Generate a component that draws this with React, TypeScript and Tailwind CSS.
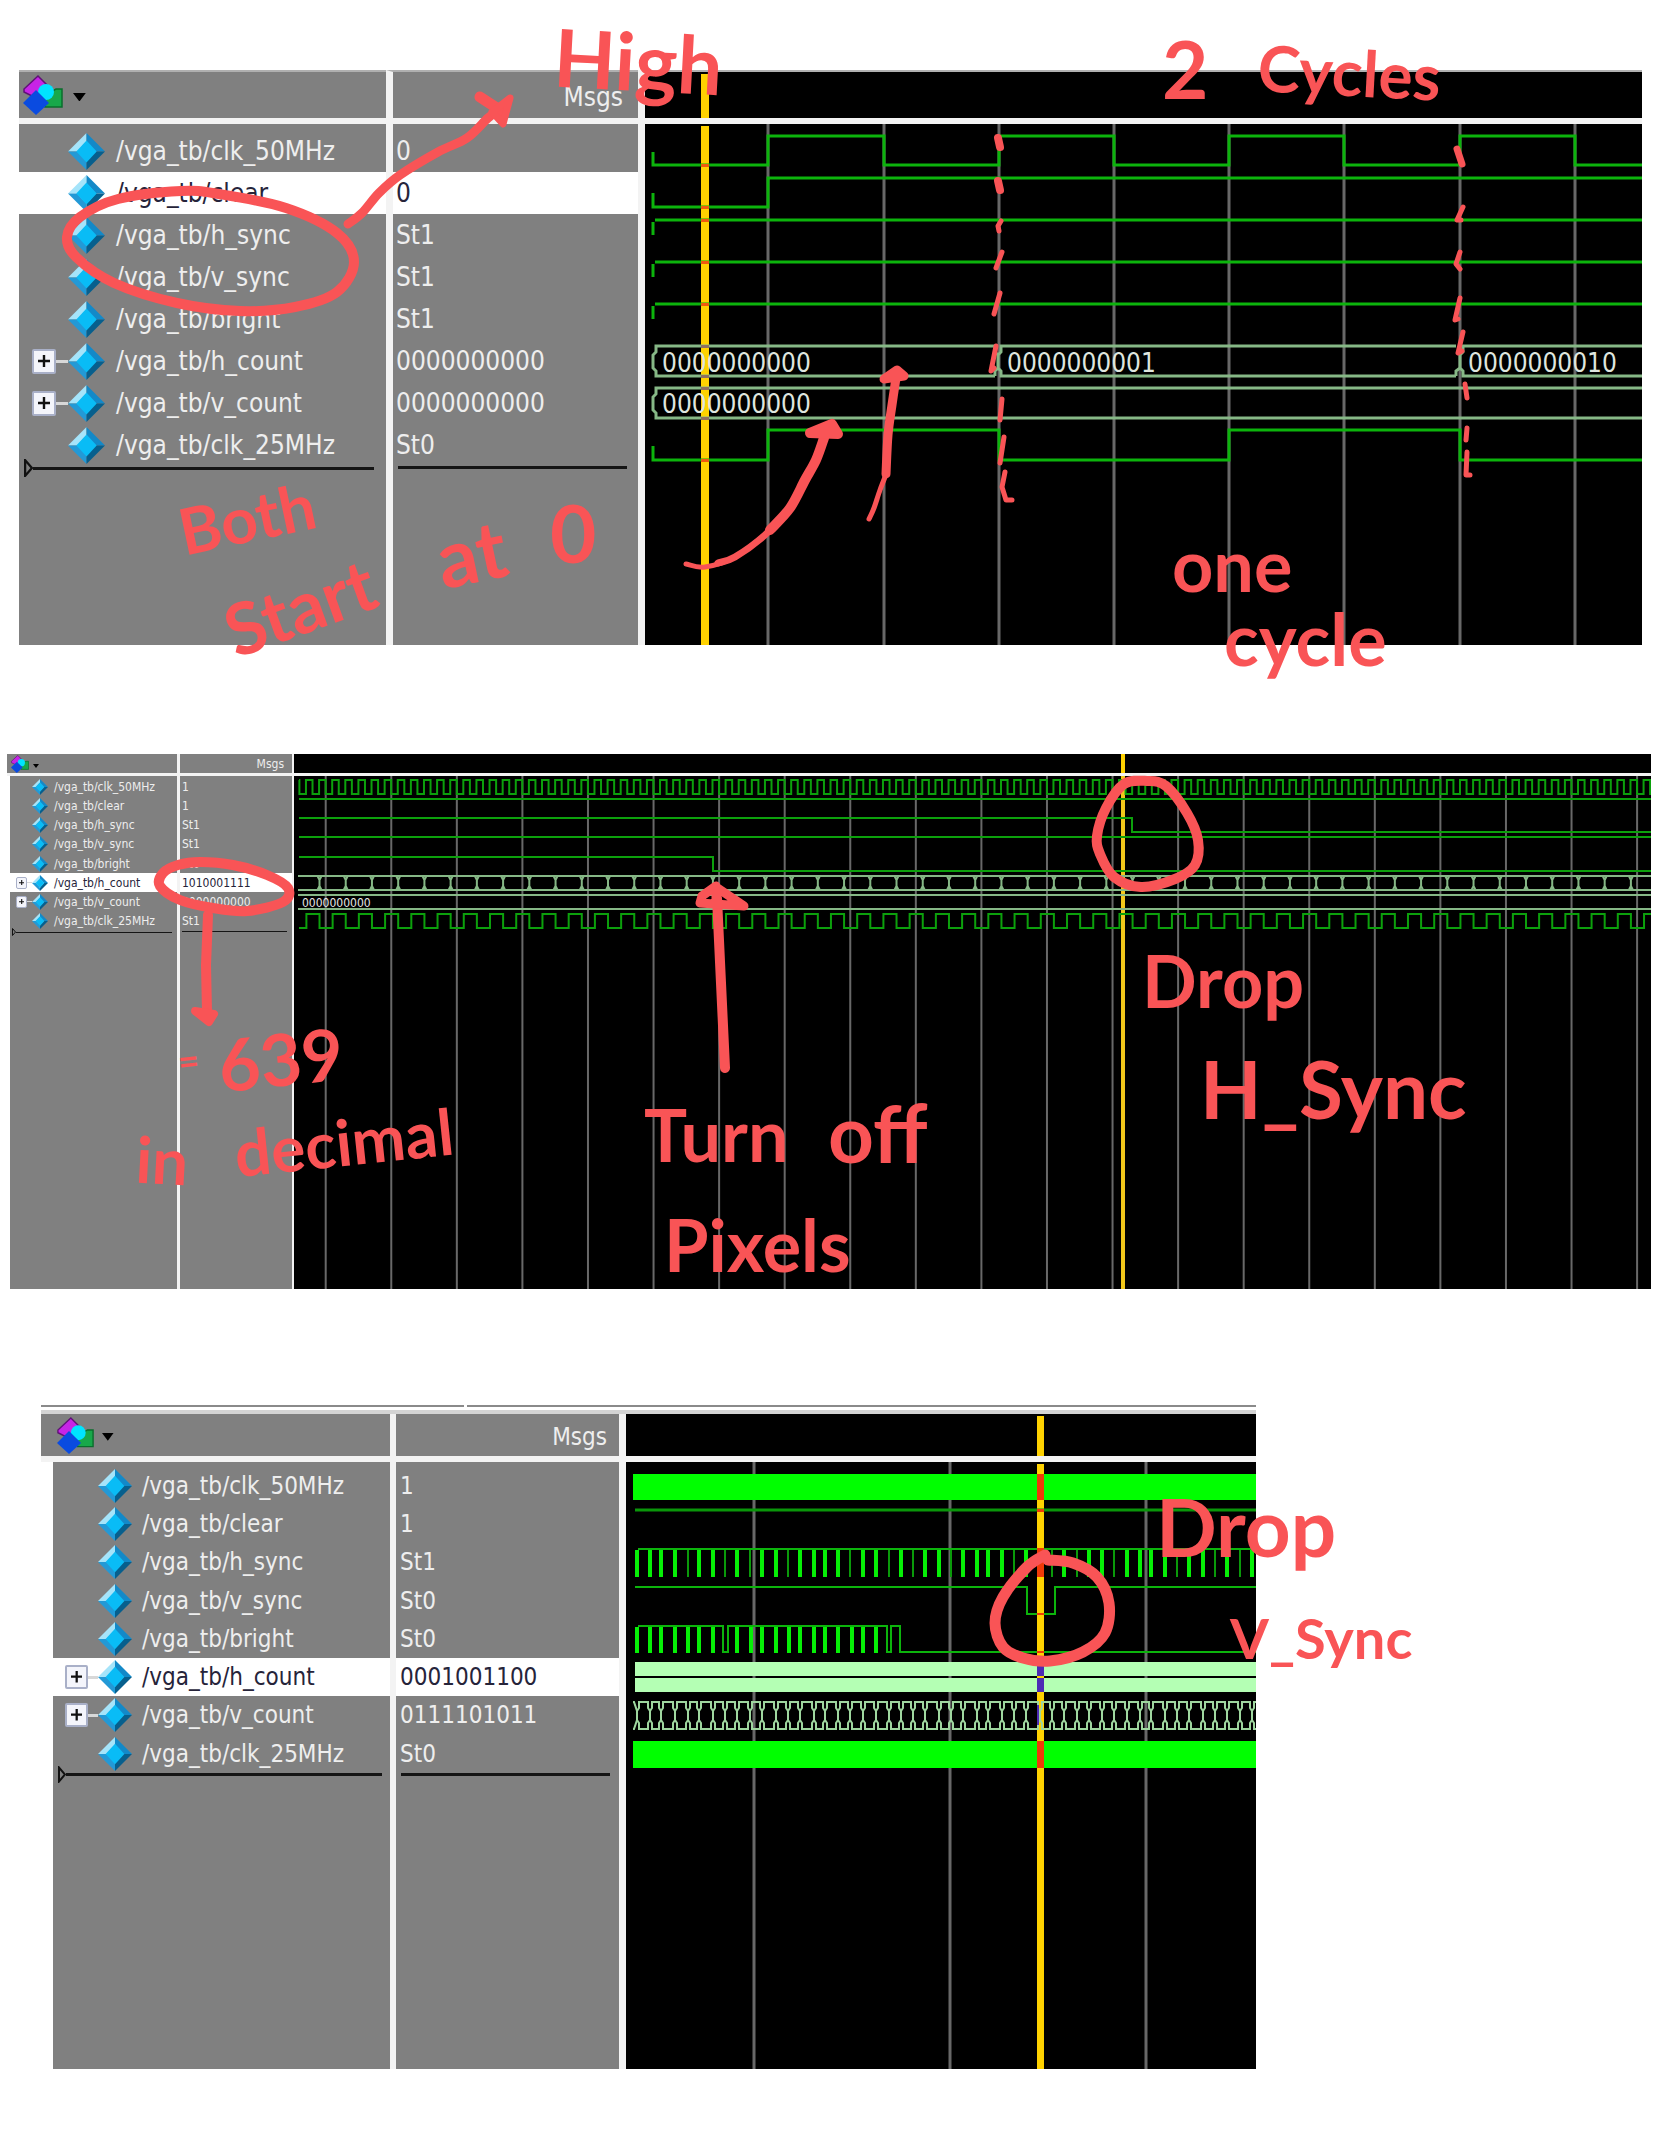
import type { ReactNode } from 'react';

type Signal = { name: string; value: string; bus?: boolean; selected?: boolean };

type Sizes = {
  table: string;
  nameCol: string;
  valueCol: string;
  header: string;
  divider: string;
  indent: string;
  spacer: string;
  row: string;
  tail: string;
  slot: string;
  expander: string;
  diamond: string;
  nameGap: string;
  valuePad: string;
  msgsPad: string;
  logo: string;
  caret: string;
  rule: string;
  nameRule: string;
  valueRule: string;
  stop: string;
};

function Diamond({ className }: { className: string }) {
  return (
    <svg viewBox="0 0 40 40" className={'shrink-0 ' + className} aria-hidden="true">
      <polygon points="20,0 0,20 10,20 20,9" fill="#a5e4fa" />
      <polygon points="20,0 40,20 30,20 20,9" fill="#1389c8" />
      <polygon points="0,20 20,40 20,31 10,20" fill="#2399d6" />
      <polygon points="40,20 20,40 20,31 30,20" fill="#075f8d" />
      <polygon points="20,8 31,20 20,32 9,20" fill="#09bcf6" />
    </svg>
  );
}

function Logo({ className }: { className: string }) {
  return (
    <svg viewBox="0 0 40 40" className={'shrink-0 ' + className} aria-hidden="true">
      <polygon points="15,1 28,14 15,24 1,17 1,14" fill="#c724e6" stroke="#5f1277" strokeWidth="1.5" />
      <path d="M22 32 V20 L33 14 H39 V32 Z" fill="#18a84a" stroke="#0a6d2c" strokeWidth="1.5" />
      <circle cx="23" cy="17" r="8" fill="#00e4ff" />
      <polygon points="13,15 26,28 13,40 0,28" fill="#0a4be0" />
    </svg>
  );
}

function SignalTable({ s, signals }: { s: Sizes; signals: Signal[] }) {
  return (
    <table
      className={'shrink-0 table-fixed border-separate border-spacing-0 bg-[#808080] leading-none whitespace-nowrap ' + s.table}
    >
      <colgroup>
        <col className={s.nameCol} />
        <col className={s.valueCol} />
      </colgroup>
      <thead>
        <tr>
          <th className={'border-[#f3f3f3] p-0 text-left ' + s.header}>
            <button type="button" aria-label="Signal list menu" className={'flex items-center ' + s.caret}>
              <Logo className={s.logo} />
              <svg viewBox="0 0 12 8" className="mt-1 w-1/5" aria-hidden="true">
                <polygon points="0,0 12,0 6,8" fill="#000" />
              </svg>
            </button>
          </th>
          <th
            className={
              'border-[#f3f3f3] p-0 text-right font-normal text-[#eeeeee] ' + s.header + ' ' + s.divider + ' ' + s.msgsPad
            }
          >
            Msgs
          </th>
        </tr>
      </thead>
      <tbody>
        <tr className={s.spacer}>
          <td className={'border-white p-0 ' + s.indent} />
          <td className={'border-[#f3f3f3] p-0 ' + s.divider} />
        </tr>
        {signals.map((sig) => {
          const tone = sig.selected ? 'bg-white text-[#26243a]' : 'text-[#eeeeee]';
          return (
            <tr key={sig.name} className={s.row}>
              <td className={'border-white p-0 ' + s.indent + ' ' + tone}>
                <div className="flex items-center">
                  <span className={'flex shrink-0 items-center justify-end ' + s.slot}>
                    {sig.bus && (
                      <>
                        <button
                          type="button"
                          aria-label={'Expand ' + sig.name}
                          className={
                            'flex shrink-0 items-center justify-center rounded-[2px] border-[#a9b0c8] bg-[#f4f5fb] ' + s.expander
                          }
                        >
                          <svg viewBox="0 0 12 12" className="w-3/5" aria-hidden="true">
                            <path d="M6 0V12M0 6H12" stroke="#111" strokeWidth="2.4" />
                          </svg>
                        </button>
                        <span className={'grow bg-[#d8d8d8] ' + s.rule} />
                      </>
                    )}
                  </span>
                  <Diamond className={s.diamond} />
                  <span className={s.nameGap}>{sig.name}</span>
                </div>
              </td>
              <td className={'border-[#f3f3f3] p-0 ' + s.divider + ' ' + s.valuePad + ' ' + tone}>{sig.value}</td>
            </tr>
          );
        })}
        <tr className={s.tail}>
          <td className={'border-white p-0 align-top ' + s.indent}>
            <div className={'flex items-center ' + s.nameRule}>
              <svg viewBox="0 0 8 16" className={'shrink-0 ' + s.stop} aria-hidden="true">
                <path d="M1 1V15L7 8Z" fill="none" stroke="#111" strokeWidth="2" />
              </svg>
              <span className={'grow bg-[#151515] ' + s.rule} />
            </div>
          </td>
          <td className={'border-[#f3f3f3] p-0 align-top ' + s.divider}>
            <div className={'flex items-center ' + s.valueRule}>
              <span className={'grow bg-[#151515] ' + s.rule} />
            </div>
          </td>
        </tr>
      </tbody>
    </table>
  );
}

function WavePane({
  edge,
  header,
  cursorHead,
  ox,
  oy,
  children,
}: {
  edge: string;
  header: string;
  cursorHead: string;
  ox: number;
  oy: number;
  children: ReactNode;
}) {
  return (
    <div className={'flex min-w-0 grow flex-col border-[#f3f3f3] bg-black ' + edge}>
      <div className={'relative shrink-0 border-[#f3f3f3] ' + header}>
        <span className={'absolute bottom-0 bg-[#ffd200] ' + cursorHead} />
      </div>
      <div className="relative grow overflow-hidden">
        <svg className="absolute inset-0 h-full w-full">
          <g transform={`translate(${-ox} ${-oy})`}>{children}</g>
        </svg>
      </div>
    </div>
  );
}

const FAR = 4000;
const GREEN = '#0cb40c';
const PALE = '#86b886';

function range(n: number) {
  return Array.from({ length: n }, (_, i) => i);
}

/* Square wave that starts at x0 and toggles at each of the given edges. */
function square(x0: number, edges: number[], high: number, low: number, startHigh = false) {
  let up = startHigh;
  let d = `M${x0} ${up ? high : low}`;
  edges.forEach((x) => {
    d += `H${x}`;
    up = !up;
    d += `V${up ? high : low}`;
  });
  return d + `H${FAR}`;
}

function Grid({ xs, y, w }: { xs: number[]; y: number; w: number }) {
  return <path d={xs.map((x) => `M${x} ${y}V${FAR}`).join('')} stroke="#686868" strokeWidth={w} />;
}

function WaveOne() {
  const grid = range(26).map((i) => Math.round(768.3 + 115.2 * i));
  return (
    <>
      <Grid xs={grid} y={120} w={3} />
      <rect x={701} y={126} width={8} height={FAR} fill="#ffd200" />
      <g fill="none" stroke={GREEN} strokeWidth={3}>
        <path d={'M653 152V165' + square(653, grid, 136, 165).replace('M653 165', '')} />
        <path d={`M653 193V207H768V178H${FAR}`} />
        <path d={`M653 235V222M655 220H${FAR}`} />
        <path d={`M653 277V264M655 262H${FAR}`} />
        <path d={`M653 319V306M655 304H${FAR}`} />
        <path d={'M653 446V460' + square(653, grid.filter((_, i) => i % 2 === 0), 430, 460).replace('M653 460', '')} />
      </g>
      <g fill="none" stroke={PALE} strokeWidth={3}>
        <path d="M995 346H656V352L653 355V368L656 371V376H995" />
        <path d="M1456 346H1001V352L998 355V368L1001 371V376H1456M995 376V371L998 368M995 346V352L998 355" />
        <path d={`M${FAR} 346H1463V352L1460 355V368L1463 371V376H${FAR}M1456 376V371L1460 368`} />
        <path d={`M${FAR} 388H656V394L653 397V410L656 413V418H${FAR}`} />
      </g>
      <g fill="#f05a10">
        {[165, 207, 220, 262, 304, 460].map((y) => (
          <rect key={y} x={701} y={y - 1} width={8} height={3} />
        ))}
      </g>
      <g fill="#8f7060">
        {[346, 376, 388, 418].map((y) => (
          <rect key={y} x={701} y={y - 1} width={8} height={3} />
        ))}
      </g>
      <g fill="#dfe6df" fontSize="26">
        <text x={662} y={372}>0000000000</text>
        <text x={1007} y={372}>0000000001</text>
        <text x={1468} y={372}>0000000010</text>
        <text x={662} y={413}>0000000000</text>
      </g>
    </>
  );
}

function WaveTwo() {
  const grid = range(40).map((i) => 325.7 + 65.57 * i);
  const fast = range(400).map((i) => 299.4 + 6.557 * i);
  const slow = range(200).map((i) => 306.4 + 13.114 * i);
  const cells = range(100).map((i) => 319.5 + 26.228 * i);
  return (
    <>
      <Grid xs={grid} y={770} w={2} />
      <rect x={1121} y={770} width={4} height={FAR} fill="#f2c81a" />
      <g fill="none" stroke="#0ca00c" strokeWidth={2}>
        <path d={square(299, fast, 780, 794, true)} />
        <path d={`M299 799H${FAR}`} />
        <path d={`M299 818H1132V832H${FAR}`} />
        <path d={`M299 837H${FAR}`} />
        <path d={`M299 857H713V871H${FAR}`} />
        <path d={square(299, slow, 914, 928)} />
      </g>
      <g fill="none" stroke={PALE} strokeWidth={2}>
        <path d={`M298 876H${FAR}M298 890H${FAR}M298 895H${FAR}M298 909H${FAR}`} />
        <path
          strokeWidth={2}
          d={cells.map((x) => `M${x - 2} 876L${x} 880V886L${x - 2} 890M${x + 2} 876L${x} 880M${x} 886L${x + 2} 890`).join('')}
        />
      </g>
      <text x={302} y={907} fontSize="12" fill="#e6e6e6">
        0000000000
      </text>
    </>
  );
}

const THICK = [
  50, 91, 124, 165, 238, 279, 352, 427, 467, 541, 581, 614, 655, 728, 769, 843, 916, 957, 1030, 1071, 1104, 1145, 1218,
  1261, 1332, 1407, 1446, 1520, 1561, 1594, 1634, 1708, 1748, 1822, 1896, 1935,
];
const THIN = [203, 316, 390, 504, 691, 806, 880, 992, 1183, 1295, 1370, 1483, 1671, 1785, 1859];
const BRIGHT = [50, 91, 124, 165, 205, 238, 279, 352, 393, 427, 467, 508, 541, 581, 614, 655, 695, 728, 769];

function WaveThree() {
  const grid = range(16).map((i) => Math.round(754.3 + 195.6 * i));
  const cells = [...THICK, ...THIN].sort((a, b) => a - b).map((v) => Math.round(620 + v / 3));
  const bars = (list: number[], w: number, y: number, h: number) =>
    list.map((v) => <rect key={v} x={Math.round(620 + v / 3 - w / 2)} y={y} width={w} height={h} />);
  return (
    <>
      <Grid xs={grid} y={1450} w={3} />
      <rect x={1037} y={1462} width={7} height={FAR} fill="#ffd200" />
      <rect x={633} y={1472} width={FAR} height={26} fill="#00ff00" />
      <rect x={633} y={1739} width={FAR} height={27} fill="#00ff00" />
      <g fill="#06f006">
        {bars(THICK, 4, 1548, 27)}
        {bars(BRIGHT, 4, 1625, 26)}
      </g>
      <g fill="#0a9a0a">{bars(THIN, 2, 1548, 27)}</g>
      <g fill="none" stroke={GREEN} strokeWidth={2}>
        <path strokeWidth={3} stroke="#0a960a" d={`M635 1508H${FAR}`} />
        <path d={`M638 1547H${FAR}`} />
        <path d={`M635 1585H1027V1612H1055V1585H${FAR}`} />
        <path d={`M638 1624H723V1650H728V1624H887V1650H891V1624H900V1650H${FAR}`} />
      </g>
      <rect x={635} y={1660} width={FAR} height={14} fill="#b4ffb4" />
      <rect x={635} y={1676} width={FAR} height={14} fill="#b4ffb4" />
      <g fill="none" stroke="#9ed69e" strokeWidth={2}>
        <path d="M633 1700H634L637 1709V1718L634 1727H633" />
        {cells.slice(0, -1).map((a, i) => {
          const b = cells[i + 1];
          return (
            <path
              key={a}
              d={`M${a + 2} 1700H${b - 2}V1706L${b} 1709V1718L${b - 2} 1721V1727H${a + 2}V1721L${a} 1718V1709L${a + 2} 1706Z`}
            />
          );
        })}
      </g>
      <g fill="#f03a08">
        <rect x={1037} y={1472} width={7} height={26} />
        <rect x={1037} y={1507} width={7} height={3} />
        <rect x={1037} y={1546} width={7} height={29} />
        <rect x={1037} y={1611} width={7} height={2} />
        <rect x={1037} y={1649} width={7} height={2} />
        <rect x={1037} y={1739} width={7} height={27} />
      </g>
      <g fill="#4d2bb5">
        <rect x={1037} y={1660} width={7} height={14} />
        <rect x={1037} y={1676} width={7} height={14} />
        <rect x={1037} y={1703} width={2} height={20} />
      </g>
    </>
  );
}

type Pt = [number, number];

/* Smooth pen stroke through the given points. */
function stroke(p: Pt[], closed = false) {
  const n = p.length;
  const at = (i: number) => (closed ? p[(i + n) % n] : p[Math.max(0, Math.min(n - 1, i))]);
  let d = `M${p[0][0]} ${p[0][1]}`;
  for (let i = 0; i < (closed ? n : n - 1); i++) {
    const [a, b, c, e] = [at(i - 1), at(i), at(i + 1), at(i + 2)];
    d += `C${b[0] + (c[0] - a[0]) / 6} ${b[1] + (c[1] - a[1]) / 6} ${c[0] - (e[0] - b[0]) / 6} ${c[1] - (e[1] - b[1]) / 6} ${c[0]} ${c[1]}`;
  }
  return d;
}

function PenMarks() {
  return (
    <svg className="pointer-events-none absolute inset-0 h-full w-full" aria-hidden="true">
      <g fill="none" stroke="#f95456" strokeLinecap="round" strokeLinejoin="round" strokeWidth={10}>
        <path
          d={stroke(
            [
              [181, 191], [219, 194], [286, 208], [337, 233], [354, 262], [337, 292], [295, 307], [240, 311],
              [177, 303], [114, 283], [76, 257], [67, 237], [80, 217], [118, 199],
            ],
            true,
          )}
        />
        <path strokeWidth={9} d={stroke([[348, 224], [362, 213], [379, 193], [400, 175], [438, 152], [467, 138], [488, 118], [499, 110]])} />
        <path strokeWidth={11} d="M480 97L503 112" />
        <path strokeWidth={7} d="M503 124L510 98L492 112Z" fill="#f95456" />

        <path strokeWidth={5} d={stroke([[686, 564], [705, 567], [735, 557], [765, 535]])} />
        <path strokeWidth={7} d={stroke([[718, 563], [735, 557], [765, 535], [790, 508]])} />
        <path d={stroke([[770, 530], [790, 508], [805, 480], [816, 460], [824, 438]])} />
        <path strokeWidth={10} fill="#f95456" d="M810 433L832 424L838 434Z" />
        <path strokeWidth={5} d={stroke([[869, 519], [874, 508], [880, 490], [887, 472]])} />
        <path strokeWidth={9} d={stroke([[886, 474], [888, 435], [892, 405], [896, 378]])} />
        <path strokeWidth={9} fill="#f95456" d="M884 379L897 370L904 376Z" />

        <path strokeWidth={8} d="M998 138L1000 147M998 181L1000 190" />
        <path
          strokeWidth={5}
          d="M1001 221L998 226L999 231M1002 252L996 268M1000 293L994 314M996 346L991 371L994 368M1002 399L1000 420M1004 437L1000 463M1005 472L1002 487L1006 500L1012 500"
        />
        <path strokeWidth={7} d="M1457 149L1462 164" />
        <path
          strokeWidth={5}
          d="M1463 207L1457 220L1461 220M1460 252L1456 264L1460 269M1460 298L1455 320L1458 319M1463 332L1458 353L1462 351M1465 384L1467 398M1467 428L1466 440M1467 452L1466 475L1470 475"
        />

        <path
          d={stroke(
            [
              [200, 862], [233, 865], [267, 875], [288, 888], [283, 902], [247, 911], [213, 908], [180, 900],
              [160, 886], [163, 873], [178, 865],
            ],
            true,
          )}
        />
        <path d="M208 915L206 965L207 1012" />
        <path strokeWidth={8} fill="#f95456" d="M195 1011L209 1022L214 1014Z" />

        <path d="M717 898L725 1068" />
        <path strokeWidth={9} d="M716 886L702 896L700 903L744 906L716 887V902" />

        <path
          d={stroke(
            [
              [1147, 781], [1166, 786], [1187, 813], [1198, 840], [1195, 865], [1175, 879], [1141, 887],
              [1114, 877], [1100, 854], [1097, 836], [1106, 808], [1124, 784],
            ],
            true,
          )}
        />

        <path
          strokeWidth={11}
          d={stroke([
            [1045, 1555], [1027, 1567], [1003, 1597], [995, 1623], [1003, 1647], [1023, 1658], [1050, 1661],
            [1083, 1652], [1105, 1633], [1109, 1603], [1097, 1577], [1073, 1563], [1048, 1560],
          ])}
        />
      </g>
    </svg>
  );
}

const NOTES: [string, string][] = [
  ['High', 'left-[554px] top-[20px] text-[80px] rotate-3'],
  ['2', 'left-[1162px] top-[28px] text-[80px]'],
  ['Cycles', 'left-[1258px] top-[40px] text-[64px] rotate-3'],
  ['Both', 'left-[178px] top-[486px] text-[64px] -rotate-12'],
  ['Start', 'left-[222px] top-[570px] text-[72px] -rotate-20'],
  ['at', 'left-[436px] top-[512px] text-[80px] -rotate-12'],
  ['0', 'left-[550px] top-[492px] text-[80px]'],
  ['one', 'left-[1172px] top-[528px] text-[72px]'],
  ['cycle', 'left-[1224px] top-[602px] text-[72px]'],
  ['=', 'left-[178px] top-[1042px] text-[36px] -rotate-6'],
  ['639', 'left-[218px] top-[1022px] text-[72px] -rotate-6'],
  ['in', 'left-[136px] top-[1128px] text-[64px] rotate-3'],
  ['decimal', 'left-[234px] top-[1110px] text-[64px] -rotate-6'],
  ['Turn', 'left-[644px] top-[1098px] text-[72px]'],
  ['off', 'left-[828px] top-[1092px] text-[80px]'],
  ['Pixels', 'left-[664px] top-[1208px] text-[72px]'],
  ['Drop', 'left-[1142px] top-[944px] text-[72px]'],
  ['H_Sync', 'left-[1200px] top-[1048px] text-[80px]'],
  ['Drop', 'left-[1156px] top-[1486px] text-[80px]'],
  ['V_Sync', 'left-[1230px] top-[1610px] text-[56px]'],
];

const large: Sizes = {
  table: 'w-[619px] text-[26px]',
  nameCol: 'w-[367px]',
  valueCol: 'w-[252px]',
  header: 'h-[54px] border-t-2 border-b-6 border-t-[#b0b0b0]',
  divider: 'border-l-7',
  indent: '',
  spacer: 'h-[6px]',
  row: 'h-[42px]',
  tail: 'h-[179px]',
  slot: 'ml-[13px] w-[36px]',
  expander: 'h-[25px] w-[24px] border-2',
  diamond: 'size-[37px]',
  nameGap: 'ml-[11px]',
  valuePad: 'pl-[3px]',
  msgsPad: 'pt-1 pr-[15px]',
  logo: 'size-[40px]',
  caret: 'ml-1 w-[64px] gap-[10px]',
  rule: 'h-[3px]',
  nameRule: '-mt-[7px] mr-[12px] ml-[5px]',
  valueRule: 'mr-[11px] ml-[5px]',
  stop: 'h-[18px] w-[9px]',
};

const small: Sizes = {
  table: 'w-[285px] text-[12px]',
  nameCol: 'w-[170px]',
  valueCol: 'w-[115px]',
  header: 'h-[22px] border-b-3',
  divider: 'border-l-3',
  indent: 'border-l-3',
  spacer: 'h-px',
  row: 'h-[19px] nth-[4n+1]:h-[20px]',
  tail: 'h-[358px]',
  slot: 'ml-[6px] w-[16px]',
  expander: 'h-[12px] w-[11px] border',
  diamond: 'size-[16px]',
  nameGap: 'ml-[6px]',
  valuePad: 'pl-[2px]',
  msgsPad: 'pr-[8px]',
  logo: 'size-[18px]',
  caret: 'ml-1 w-[30px] gap-1',
  rule: 'h-px',
  nameRule: '-mt-[3px] mr-[5px] ml-[2px]',
  valueRule: 'mr-[5px] ml-[2px]',
  stop: 'h-[8px] w-[4px]',
};

const medium: Sizes = {
  table: 'w-[578px] text-[24px]',
  nameCol: 'w-[349px]',
  valueCol: 'w-[229px]',
  header: 'h-[48px] border-b-6',
  divider: 'border-l-6',
  indent: 'border-l-12',
  spacer: 'h-[5px]',
  row: 'h-[38px] nth-[4n+1]:h-[39px]',
  tail: 'h-[296px]',
  slot: 'ml-[12px] w-[33px]',
  expander: 'h-[24px] w-[23px] border-2',
  diamond: 'size-[34px]',
  nameGap: 'ml-[10px]',
  valuePad: 'pl-1',
  msgsPad: 'pt-1 pr-[12px]',
  logo: 'size-[37px]',
  caret: 'ml-4 w-[58px] gap-[8px]',
  rule: 'h-[3px]',
  nameRule: '-mt-[7px] mr-[8px] ml-[5px]',
  valueRule: 'mr-[9px] ml-[5px]',
  stop: 'h-[17px] w-[8px]',
};

const names = ['clk_50MHz', 'clear', 'h_sync', 'v_sync', 'bright', 'h_count', 'v_count', 'clk_25MHz'];

function makeSignals(values: string[], selected: string): Signal[] {
  return names.map((n, i) => ({
    name: '/vga_tb/' + n,
    value: values[i],
    bus: n.endsWith('count'),
    selected: n === selected,
  }));
}

const first = makeSignals(['0', '0', 'St1', 'St1', 'St1', '0000000000', '0000000000', 'St0'], 'clear');
const second = makeSignals(['1', '1', 'St1', 'St1', 'St0', '1010001111', '0000000000', 'St1'], 'h_count');
const third = makeSignals(['1', '1', 'St1', 'St0', 'St0', '0001001100', '0111101011', 'St0'], 'h_count');

export default function App() {
  return (
    <main className="relative overflow-hidden bg-white pt-[70px] pb-[86px] font-['DejaVu_Sans_Condensed','Noto_Sans',sans-serif]">
      <section className="mr-[22px] ml-[19px] flex" aria-label="Simulation start">
        <SignalTable s={large} signals={first} />
        <WavePane
          edge="border-l-7"
          header="h-[54px] border-t-2 border-b-6 border-t-[#b0b0b0]"
          cursorHead="left-[56px] top-[2px] w-[8px]"
          ox={645}
          oy={124}
        >
          <WaveOne />
        </WavePane>
      </section>

      <section className="mt-[109px] mr-[13px] ml-[7px] flex" aria-label="Horizontal sync">
        <SignalTable s={small} signals={second} />
        <WavePane edge="border-l-2" header="h-[22px] border-b-3" cursorHead="left-[827px] top-0 w-[4px]" ox={294} oy={776}>
          <WaveTwo />
        </WavePane>
      </section>

      <section className="mt-[114px] mr-[408px] ml-[41px]" aria-label="Vertical sync">
        <div className="flex h-[11px] gap-[3px] border-b-4 border-[#d4d4d4]">
          <span className="h-[4px] w-[423px] border-b-2 border-[#8a8a8a]" />
          <span className="h-[4px] grow border-b-2 border-[#8a8a8a]" />
        </div>
        <div className="flex">
          <SignalTable s={medium} signals={third} />
          <WavePane edge="border-l-7" header="h-[48px] border-b-6" cursorHead="left-[411px] top-[2px] w-[7px]" ox={626} oy={1460}>
            <WaveThree />
          </WavePane>
        </div>
      </section>

      <PenMarks />
      {NOTES.map(([text, place]) => (
        <span
          key={place}
          className={"absolute leading-none font-bold whitespace-nowrap text-[#f95456] font-['Lato',sans-serif] " + place}
        >
          {text}
        </span>
      ))}
    </main>
  );
}
